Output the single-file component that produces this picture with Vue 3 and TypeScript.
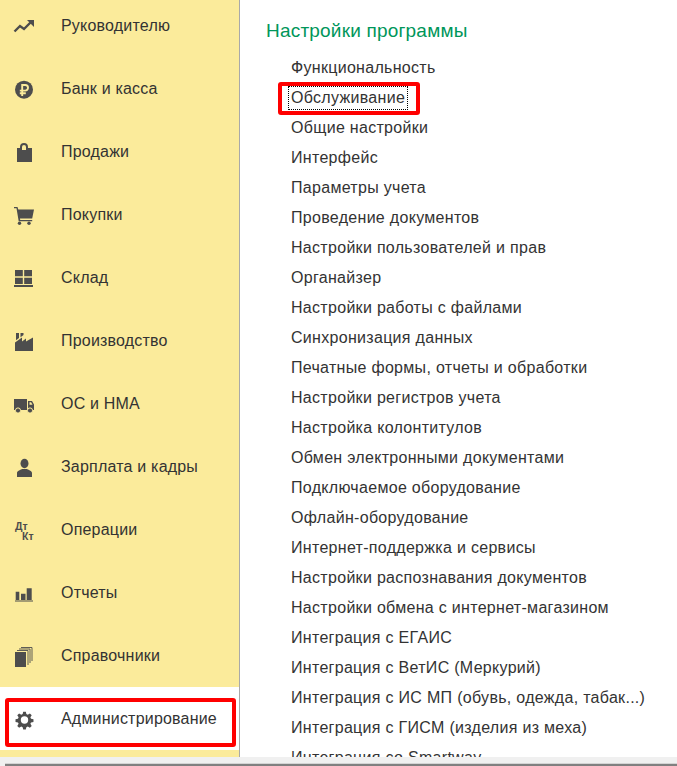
<template>
  <div class="page">
    <div class="main">
      <aside class="sidebar">
        <ul class="sections">
          <li
            v-for="section in sections"
            :key="section.title"
            class="section"
            :class="{ active: section.active }"
          >
            <span class="section-icon">
              <svg width="24" height="24" viewBox="0 0 24 24" v-html="section.icon"></svg>
            </span>
            <span class="section-title">{{ section.title }}</span>
            <span v-if="section.active" class="mark mark-section"></span>
          </li>
        </ul>
      </aside>
      <main class="content">
        <h1 class="heading">Настройки программы</h1>
        <ul class="links">
          <li v-for="link in links" :key="link" class="link" :class="{ focused: link === focusedLink }">
            <span class="link-text">{{ link }}</span>
            <span v-if="link === focusedLink" class="mark mark-link"></span>
          </li>
        </ul>
      </main>
    </div>
    <div class="statusbar">
      <div class="statusbar-line"></div>
    </div>
  </div>
</template>

<script setup lang="ts">
interface Section {
  title: string
  icon: string
  active?: boolean
}

const focusedLink = 'Обслуживание'
const bg = '#fbeb9b'

const sections: Section[] = [
  {
    title: 'Руководителю',
    icon: '<path d="M2.500 17.500L8 12l4 3 7-7" fill="none" stroke="#4d4d4d" stroke-width="2.400"/><path d="M15 6h7v7z"/>',
  },
  {
    title: 'Банк и касса',
    icon: `<circle cx="12" cy="12.700" r="9"/><path d="M10.200 19v-11h3a2.800 2.800 0 0 1 0 5.600H7.800M7.800 16.200h6" fill="none" stroke="${bg}" stroke-width="1.900"/>`,
  },
  {
    title: 'Продажи',
    icon: '<path d="M5 8h3V7a4 4 0 0 1 8 0v1h4v14H5zM10 10h4V7a2 2 0 0 0-4 0z" fill-rule="evenodd"/>',
  },
  {
    title: 'Покупки',
    icon: '<path d="M2 4h3.500l.8 2.500H22l-1.800 9H8l.2 1.500h12v1.300H6.700L4.500 5.300H2z"/><circle cx="7.500" cy="20.200" r="1.700"/><circle cx="17" cy="20.200" r="1.700"/>',
  },
  {
    title: 'Склад',
    icon: '<path d="M3 4h7.800v6.300H3zM12.200 4H20v6.300h-7.800zM3 11.700h7.800V18H3zM12.200 11.700H20V18h-7.800zM2 19h19v2H2z"/>',
  },
  {
    title: 'Производство',
    icon: '<path d="M3 22v-8.500l7-5v4l4-3v3l7-4V22zM4 4h3v5l-3 2.200zM8.500 4h3v2L8.500 8.200z"/>',
  },
  {
    title: 'ОС и НМА',
    icon: `<path d="M2 7h13v11H2zM16 9h4l2 3.500V18h-6zM17.500 10.300v2.500h3l-1.400-2.500z" fill-rule="evenodd"/><circle cx="6" cy="18.500" r="2.600" stroke="${bg}"/><circle cx="18" cy="18.500" r="2.600" stroke="${bg}"/>`,
  },
  {
    title: 'Зарплата и кадры',
    icon: '<ellipse cx="12.500" cy="8.500" rx="4" ry="4.700"/><path d="M5 22v-4c0-2 3-3 5-4h5c2 1 5 2 5 4v4z"/>',
  },
  {
    title: 'Операции',
    icon: '<text x="3" y="12" font-size="10.500" font-weight="700" font-family="Liberation Sans, sans-serif">Дт</text><text x="10" y="22" font-size="10.500" font-weight="700" font-family="Liberation Sans, sans-serif">Кт</text>',
  },
  {
    title: 'Отчеты',
    icon: '<path d="M3.700 10.700h3.600V19H3.700zM9 12.700h4.500V19H9zM14.700 7.300h5V19h-5zM3 19.500h18v1H3z"/>',
  },
  {
    title: 'Справочники',
    icon: '<path d="M3 8h11v15H3z"/><path d="M16 21V6.500H5M18 19V5H7M20 17V3.500H9" fill="none" stroke="#4d4d4d" stroke-width=".9"/>',
  },
  {
    title: 'Администрирование',
    active: true,
    icon: '<g transform="translate(12.500 13) scale(.88) translate(-12 -12)"><path d="M10.500 2.500h3l.6 2.800 1.600.7 2.400-1.500 2.100 2.100-1.500 2.400.7 1.600 2.800.6v3l-2.800.6-.7 1.600 1.500 2.400-2.100 2.100-2.400-1.500-1.600.7-.6 2.800h-3l-.6-2.800-1.600-.7-2.400 1.500-2.100-2.100 1.500-2.400-.7-1.600-2.800-.6v-3l2.800-.6.7-1.600-1.500-2.400 2.100-2.100 2.400 1.500 1.600-.7zM12 7.800a4.200 4.200 0 1 0 0 8.400 4.200 4.200 0 0 0 0-8.400z" fill-rule="evenodd"/></g>',
  },
]

const links: string[] = [
  'Функциональность',
  focusedLink,
  'Общие настройки',
  'Интерфейс',
  'Параметры учета',
  'Проведение документов',
  'Настройки пользователей и прав',
  'Органайзер',
  'Настройки работы с файлами',
  'Синхронизация данных',
  'Печатные формы, отчеты и обработки',
  'Настройки регистров учета',
  'Настройка колонтитулов',
  'Обмен электронными документами',
  'Подключаемое оборудование',
  'Офлайн-оборудование',
  'Интернет-поддержка и сервисы',
  'Настройки распознавания документов',
  'Настройки обмена с интернет-магазином',
  'Интеграция с ЕГАИС',
  'Интеграция с ВетИС (Меркурий)',
  'Интеграция с ИС МП (обувь, одежда, табак...)',
  'Интеграция с ГИСМ (изделия из меха)',
  'Интеграция со Smartway',
]
</script>

<style scoped>
.page {
  width: 677px;
  height: 766px;
  display: flex;
  flex-direction: column;
  overflow: hidden;
  background: #fff;
  font-family: 'Liberation Sans', Arial, sans-serif;
}

.main {
  flex: 1;
  min-height: 0;
  display: flex;
  overflow: hidden;
}

.sidebar {
  width: 239px;
  flex-shrink: 0;
  background: #fbeb9b;
  border-right: 1px solid #a9a9a9;
  overflow: hidden;
}

.sections {
  list-style: none;
  margin: -6px 0 0;
  padding: 0;
}

.section {
  position: relative;
  height: 63px;
  display: flex;
  align-items: center;
  color: #333;
  font-size: 16px;
  letter-spacing: 0.2px;
}

.section.active {
  background: #fff;
}

.section-icon {
  width: 61px;
  flex-shrink: 0;
  display: flex;
  padding-left: 12px;
  box-sizing: border-box;
}

.section-icon svg {
  fill: #4d4d4d;
  letter-spacing: 0;
}

.content {
  flex: 1;
  min-width: 0;
  padding: 20px 0 0 26px;
  overflow: hidden;
}

.heading {
  margin: 0 0 10px;
  font-size: 19px;
  font-weight: 400;
  line-height: 22px;
  letter-spacing: 0.2px;
  color: #00965a;
}

.links {
  list-style: none;
  margin: 0;
  padding: 0 0 0 25px;
}

.link {
  position: relative;
  height: 30px;
  line-height: 30px;
  font-size: 16px;
  letter-spacing: 0.3px;
  color: #333;
  white-space: nowrap;
}

.link-text {
  display: inline-block;
  line-height: 22px;
  vertical-align: middle;
}

.focused .link-text {
  outline: 1px dotted #000;
  padding: 0 2px;
  margin-left: -2px;
}

.mark {
  position: absolute;
  border: 4px solid #f00;
  border-radius: 3px;
  box-sizing: border-box;
  pointer-events: none;
}

.mark-section {
  left: 5px;
  top: 11px;
  width: 231px;
  height: 49px;
}

.mark-link {
  left: -13px;
  top: 0;
  width: 142px;
  height: 33px;
}

.statusbar {
  height: 9px;
  flex-shrink: 0;
  display: flex;
  flex-direction: column;
  justify-content: flex-end;
  padding-left: 5px;
  background: #f0f0f0;
  box-sizing: border-box;
}

.statusbar-line {
  height: 2px;
  background: #808080;
  border-top: 1px solid #d4d4d4;
}
</style>

<style>
html,
body {
  margin: 0;
  background: #fff;
}
</style>
